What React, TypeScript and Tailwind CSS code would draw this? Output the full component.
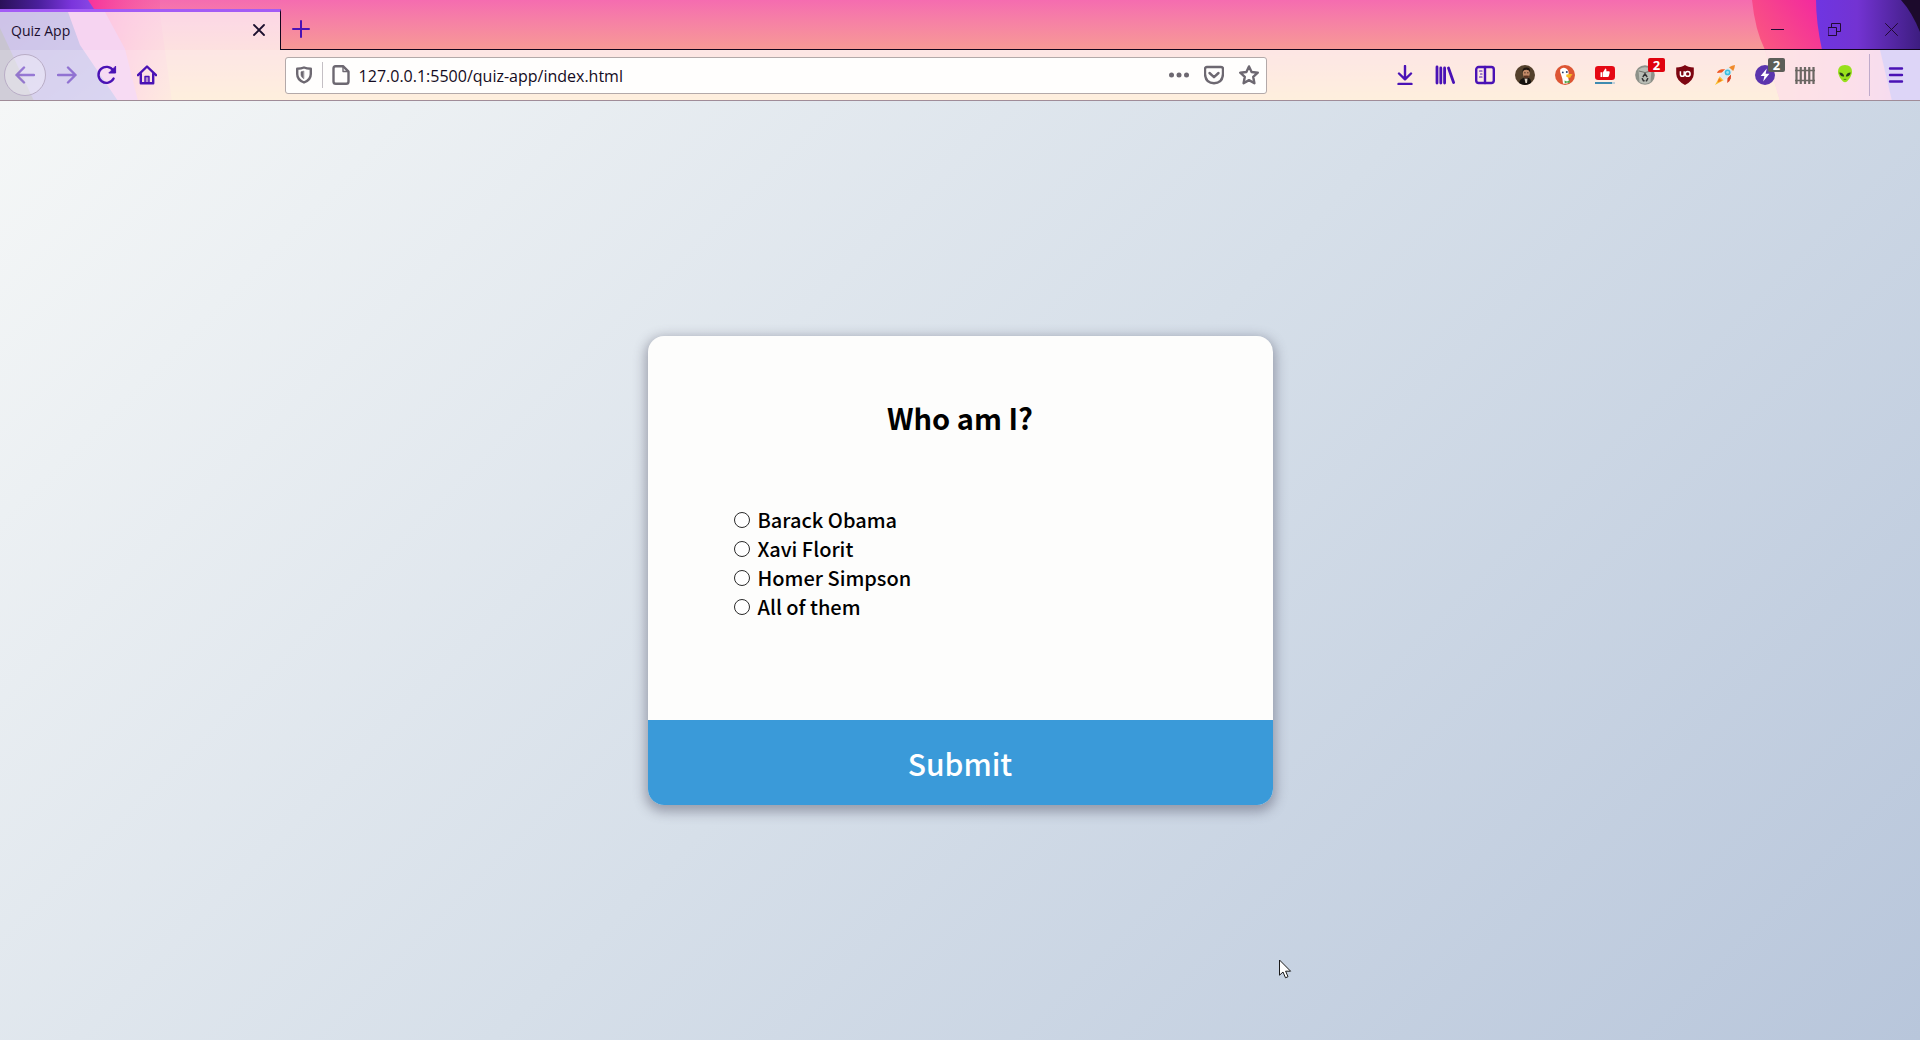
import type { ReactNode } from "react";

const ANSWERS = ["Barack Obama", "Xavi Florit", "Homer Simpson", "All of them"];

function ThemeLeft() {
  return (
    <svg className="absolute top-0 left-0 h-full w-[180px]" viewBox="0 0 180 101" preserveAspectRatio="none" aria-hidden="true">
      <defs>
        <linearGradient id="violetLeft" x1="0" x2="1" y1="0" y2="0">
          <stop offset="0" stopColor="#2a1158" />
          <stop offset="0.4" stopColor="#4a1f9c" />
          <stop offset="0.75" stopColor="#7b35dc" />
          <stop offset="1" stopColor="#8a4be6" />
        </linearGradient>
        <linearGradient id="magentaLeft" x1="0" x2="1" y1="0" y2="0">
          <stop offset="0.5" stopColor="#f72f9a" />
          <stop offset="1" stopColor="#f8629f" stopOpacity="0.2" />
        </linearGradient>
        <linearGradient id="lowLeft" x1="0" x2="1" y1="0" y2="1">
          <stop offset="0" stopColor="#5a35b0" />
          <stop offset="1" stopColor="#6a5ac8" />
        </linearGradient>
      </defs>
      <path d="M0 0H160V14L172 101H0Z" fill="url(#magentaLeft)" />
      <path d="M0 12H105L125 49L138 101H0Z" fill="#e070d0" />
      <path d="M0 0H88L96 12H0Z" fill="url(#violetLeft)" />
      <path d="M0 12H68L80 45L118 101H0Z" fill="url(#lowLeft)" />
      <path d="M0 28L34 101H0Z" fill="#463a66" />
    </svg>
  );
}

function ThemeRight() {
  return (
    <svg className="absolute top-0 right-0 h-full w-[190px]" viewBox="0 0 190 101" preserveAspectRatio="none" aria-hidden="true">
      <defs>
        <linearGradient id="redRight" x1="0" x2="1" y1="0.5" y2="0">
          <stop offset="0" stopColor="#fb5c7c" />
          <stop offset="0.5" stopColor="#f32a9e" />
          <stop offset="1" stopColor="#e874c0" />
        </linearGradient>
        <linearGradient id="violetRight" x1="0" x2="1" y1="0" y2="0">
          <stop offset="0" stopColor="#6f35e2" />
          <stop offset="0.4" stopColor="#7333d2" />
          <stop offset="1" stopColor="#3d1d80" />
        </linearGradient>
        <linearGradient id="lowRight" x1="0" x2="1" y1="0" y2="0">
          <stop offset="0" stopColor="#fa8f96" />
          <stop offset="0.6" stopColor="#f07fae" />
          <stop offset="1" stopColor="#c46ad0" />
        </linearGradient>
      </defs>
      <path d="M22 0Q25 30 35 50L50 101H190V0Z" fill="url(#redRight)" />
      <path d="M35 50L50 101H190V50Z" fill="url(#lowRight)" />
      <path d="M86 0Q86 22 92 50H190V0Z" fill="url(#violetRight)" />
      <path d="M150 50L162 101H190V50Z" fill="#7a5ae0" />
      <path d="M171 0Q182 12 190 32V0Z" fill="#1c0a2c" />
    </svg>
  );
}

function Glyph({ children, size = 20, box = 20 }: { children: ReactNode; size?: number; box?: number }) {
  return (
    <svg
      width={size}
      height={size}
      viewBox={`0 0 ${box} ${box}`}
      fill="none"
      stroke="currentColor"
      strokeWidth="2.4"
      strokeLinecap="round"
      strokeLinejoin="round"
      aria-hidden="true"
      className="shrink-0"
    >
      {children}
    </svg>
  );
}

function ToolButton({ label, children, disabled }: { label: string; children: ReactNode; disabled?: boolean }) {
  return (
    <button
      type="button"
      aria-label={label}
      disabled={disabled}
      className="relative flex h-10 w-10 shrink-0 items-center justify-center text-[#4a12b5] disabled:text-[#4a12b5]/50"
    >
      {children}
    </button>
  );
}

function Badge({ children, red }: { children: ReactNode; red?: boolean }) {
  return (
    <span
      className={`absolute top-[3px] right-0 flex h-[14px] w-[17px] items-center justify-center rounded-[2px] text-[13px] leading-none font-bold text-white ${
        red ? "bg-[#e0030f]" : "bg-[#5c5e58]"
      }`}
    >
      {children}
    </span>
  );
}

function TitleBar() {
  return (
    <div className="relative flex h-[50px] items-end">
      <div className="relative flex h-[41px] w-[281px] shrink-0 items-center border-t-[3px] border-r border-t-[#a35cf5] border-r-[#12061c] bg-white/70 pr-[9px] pb-[2px] pl-[11px]">
        <span className="flex-1 text-[14px] text-[#1c0f2e]">Quiz App</span>
        <button type="button" aria-label="Close tab" className="flex h-6 w-6 items-center justify-center text-[#1c0f2e]">
          <Glyph size={12} box={12}>
            <path d="M1 1L11 11M11 1L1 11" strokeWidth="1.8" />
          </Glyph>
        </button>
      </div>
      <div className="flex h-full flex-1 items-center justify-between border-b border-[#12061c] pt-[9px]">
        <button type="button" aria-label="New tab" className="flex h-10 w-10 items-center justify-center text-[#4a12b5]">
          <Glyph size={18} box={18}>
            <path d="M9 1V17M1 9H17" strokeWidth="2" />
          </Glyph>
        </button>
        <div className="flex text-[#210a33]">
          <button type="button" aria-label="Minimize" className="flex h-10 w-[57px] items-center justify-center">
            <Glyph size={13} box={13}>
              <path d="M0 6.5H13" strokeWidth="1" />
            </Glyph>
          </button>
          <button type="button" aria-label="Restore" className="flex h-10 w-[57px] items-center justify-center">
            <Glyph size={13} box={13}>
              <path d="M0.5 4.5H8.5V12.5H0.5ZM3.5 4.5V0.5H12.5V8.5H8.5" strokeWidth="1" />
            </Glyph>
          </button>
          <button type="button" aria-label="Close" className="flex h-10 w-[57px] items-center justify-center">
            <Glyph size={13} box={13}>
              <path d="M0.5 0.5L12.5 12.5M12.5 0.5L0.5 12.5" strokeWidth="1" />
            </Glyph>
          </button>
        </div>
      </div>
    </div>
  );
}

function AddressBar() {
  return (
    <div className="flex h-[37px] min-w-0 flex-[984] items-center rounded-[3px] border border-[#b3a9a9] bg-[#fffefd] text-[#6d6871]">
      <button type="button" aria-label="Tracking protection" className="flex h-full w-9 shrink-0 items-center justify-center">
        <Glyph size={18} box={18}>
          <path d="M9 1.5C7 2.4 4.5 2.7 2.2 2.7V8C2.2 12.5 5 15 9 16.5C13 15 15.8 12.5 15.8 8V2.7C13.5 2.7 11 2.4 9 1.5Z" />
          <path d="M8.5 5.2L6 5.8V8.5C6 10.3 7 11.6 8.5 12.5Z" fill="currentColor" strokeWidth="0.6" />
        </Glyph>
      </button>
      <span className="h-[26px] w-px shrink-0 bg-[#c4bfc4]" />
      <button type="button" aria-label="Site information" className="flex h-full w-9 shrink-0 items-center justify-center">
        <Glyph>
          <path d="M4.5 1.2H12L17.5 6.7V16.5Q17.5 18.8 15.2 18.8H4.8Q2.5 18.8 2.5 16.5V3.4Q2.5 1.2 4.5 1.2Z" />
          <path d="M12 1.5V6.5H17" strokeWidth="1.4" />
        </Glyph>
      </button>
      <input
        type="text"
        aria-label="Address"
        defaultValue="127.0.0.1:5500/quiz-app/index.html"
        className="min-w-0 flex-1 bg-transparent pt-[2px] text-[16px] text-[#140b22] outline-none"
      />
      <button type="button" aria-label="Page actions" className="flex h-full w-[35px] shrink-0 items-center justify-center">
        <Glyph>
          <g fill="currentColor" stroke="none">
            <circle cx="2.5" cy="10" r="2.5" />
            <circle cx="10" cy="10" r="2.5" />
            <circle cx="17.5" cy="10" r="2.5" />
          </g>
        </Glyph>
      </button>
      <button type="button" aria-label="Save to Pocket" className="flex h-full w-[35px] shrink-0 items-center justify-center">
        <Glyph>
          <path d="M3 2H17Q19 2 19 4V9Q18.5 18 10 18.2Q1.5 18 1 9V4Q1 2 3 2Z" />
          <path d="M5.5 8L10 12.2L14.5 8" />
        </Glyph>
      </button>
      <button type="button" aria-label="Bookmark" className="flex h-full w-[35px] shrink-0 items-center justify-center">
        <Glyph>
          <path d="M10 1.4L12.6 7L18.8 7.7L14.2 11.8L15.4 18.2L10 15.1L4.6 18.2L5.8 11.8L1.2 7.7L7.4 7Z" />
        </Glyph>
      </button>
    </div>
  );
}

function Extensions() {
  return (
    <div className="flex shrink-0 items-center">
      <ToolButton label="Downloads">
        <Glyph>
          <path d="M10 1V14M4 8.5L10 14.3L16 8.5" />
          <path d="M3.5 19H16.5" />
        </Glyph>
      </ToolButton>
      <ToolButton label="Library">
        <Glyph>
          <path d="M2 2V18M5.8 3V18M9.6 3V18M13.5 3L18.6 17.5" strokeWidth="2.8" />
        </Glyph>
      </ToolButton>
      <ToolButton label="Sidebars">
        <Glyph>
          <rect x="1.2" y="2" width="17.6" height="16" rx="2.5" />
          <path d="M10 2V18" />
          <path d="M4.5 6H7M5.5 9H7M4.5 12H7" strokeWidth="1.2" />
        </Glyph>
      </ToolButton>
      <ToolButton label="Profile">
        <svg width="20" height="20" viewBox="0 0 20 20" aria-hidden="true">
          <circle cx="10" cy="10" r="10" fill="#54412c" />
          <path d="M4 18Q5 13.5 9 13L14 13Q16.5 15 16 18Q10 21.8 4 18Z" fill="#17130f" />
          <path d="M9.5 13.5L12.5 13.5L12 18L10.5 18Z" fill="#d9cfc2" />
          <ellipse cx="11.3" cy="8.3" rx="3.4" ry="4.7" fill="#c48b68" />
          <path d="M7.6 7Q7.2 2.5 11.5 2.6Q15.5 2.6 15 7Q14 4.8 11.2 4.8Q8.5 4.8 7.6 7Z" fill="#1d140e" />
          <path d="M8.4 10.8Q11.3 10 14.2 10.8Q13.8 13.4 11.3 13.5Q8.8 13.4 8.4 10.8Z" fill="#5a3422" />
          <path d="M9.2 7.8H10.6M12.1 7.8H13.5" stroke="#3a2116" strokeWidth="0.9" />
        </svg>
      </ToolButton>
      <ToolButton label="DuckDuckGo">
        <svg width="20" height="20" viewBox="0 0 20 20" aria-hidden="true">
          <circle cx="10" cy="10" r="10" fill="#dd5634" />
          <path d="M5.2 4.5Q8 1.6 11.5 3.8Q14 5.5 13.6 9.5L13.3 13L14.3 17.5Q11.5 19.3 8 18.6Q7.5 13 6 9.5Q4.7 6.5 5.2 4.5Z" fill="#fff" />
          <path d="M11.4 9.6Q14.5 8.5 17.3 9.2Q17.8 10.4 14.8 11Q17 11.4 15.3 12.5Q12.5 13.3 11.2 11.6Z" fill="#f8bd24" />
          <circle cx="11.8" cy="7" r="1" fill="#22406f" />
          <circle cx="7.8" cy="7.4" r="0.9" fill="#22406f" />
          <path d="M9.5 15.5L12 16.5L15 15L14.6 18.2L12 17.6L9.8 18.6Z" fill="#54a94a" />
        </svg>
      </ToolButton>
      <ToolButton label="Video likes">
        <svg width="20" height="20" viewBox="0 0 20 20" aria-hidden="true">
          <rect x="0" y="1" width="20" height="14" rx="3.2" fill="#e50914" />
          <path d="M5.5 7.2H7.4V12H5.5ZM8 7.2L10.3 3.4Q11.8 3.4 11.3 6.2H14Q15 6.5 14.7 7.7L13.8 11.3Q13.5 12 12.7 12H8Z" fill="#fff" />
          <rect x="0" y="17" width="17" height="2" fill="#3f8bb0" />
          <rect x="17" y="17" width="3" height="2" fill="#c3cfd6" />
        </svg>
      </ToolButton>
      <ToolButton label="Cookie cleaner">
        <svg width="20" height="20" viewBox="0 0 20 20" aria-hidden="true">
          <circle cx="10" cy="10" r="9.8" fill="#8d9189" />
          <path d="M3.5 4.5Q10 0 16.5 4.5L15.5 17Q10 20.5 4.5 17Z" fill="#b9bdb5" />
          <path d="M4 6Q10 9 16 6" stroke="#6f736c" strokeWidth="1" fill="none" />
          <path d="M7.8 12L10 8.8L12.2 12M13 13.2L11.6 15.7H10.7M7 13.2L8.4 15.7H9.6" stroke="#333" strokeWidth="1.4" fill="none" />
        </svg>
        <Badge red>2</Badge>
      </ToolButton>
      <ToolButton label="uBlock Origin">
        <svg width="20" height="20" viewBox="0 0 20 20" aria-hidden="true">
          <path d="M10 0Q13 2.4 18.8 2.5V9Q18.5 15.6 10 20Q1.5 15.6 1.2 9V2.5Q7 2.4 10 0Z" fill="#7d0611" />
          <path d="M5.4 6.3V9.5Q5.4 11.3 7.3 11.3Q9.2 11.3 9.2 9.5V6.3M9.2 8.9V11.3" stroke="#fff" strokeWidth="1.5" fill="none" />
          <circle cx="12.7" cy="8.9" r="2.4" stroke="#fff" strokeWidth="1.5" fill="none" />
        </svg>
      </ToolButton>
      <ToolButton label="Rocket">
        <svg width="22" height="22" viewBox="0 0 22 22" aria-hidden="true">
          <path d="M6 12L1 21L10 16Z" fill="#f9c22c" />
          <path d="M5 14L3.5 18.5L8 16.8Z" fill="#f47b20" />
          <path d="M8 8.5L3 9Q4 6 7.8 5.3L11.5 5.2Z" fill="#ef5a24" />
          <path d="M13.5 14L13.2 19Q16 17.5 16.8 14.2L17 10.6Z" fill="#d8401f" />
          <path d="M5.8 12.6Q9.5 4 20 1.5Q18.5 12 9.4 16.3Z" fill="#e3e8ea" />
          <path d="M15 3.2Q18 1.5 21 1Q20.8 4 19.2 7Z" fill="#f08a2b" />
          <circle cx="13.6" cy="8.4" r="2.9" fill="#38bfe0" />
          <circle cx="13.6" cy="8.4" r="1.4" fill="#9be6f3" />
        </svg>
      </ToolButton>
      <ToolButton label="Page speed">
        <svg width="20" height="20" viewBox="0 0 20 20" aria-hidden="true">
          <circle cx="10" cy="10" r="10" fill="#5b35ad" />
          <path d="M11.8 3.5L5.6 11H9.4L8.2 16.5L14.4 8.8H10.6Z" fill="#fff" />
        </svg>
        <Badge>2</Badge>
      </ToolButton>
      <ToolButton label="Grid fence">
        <svg width="20" height="20" viewBox="0 0 20 20" stroke="#6b6763" strokeWidth="2.2" aria-hidden="true">
          <path d="M1.5 2V19M5.75 2V19M10 2V19M14.25 2V19M18.5 2V19" />
          <path d="M0 5.5H20M0 15.5H20" strokeWidth="1.6" />
        </svg>
      </ToolButton>
      <ToolButton label="Alien">
        <svg width="20" height="20" viewBox="0 0 20 20" aria-hidden="true">
          <path d="M10 0Q17 0 17 7Q16.5 12 12 16.5Q10 18 8 16.5Q3.5 12 3 7Q3 0 10 0Z" fill="#98e01c" />
          <path d="M4.3 7.6Q8.6 7.6 9.2 11.4Q5.2 12 4.3 7.6ZM15.7 7.6Q11.4 7.6 10.8 11.4Q14.8 12 15.7 7.6Z" fill="#26391b" />
          <path d="M8.7 14.4H11.3" stroke="#4f8410" strokeWidth="1" />
        </svg>
      </ToolButton>
      <span className="ml-[4px] h-[42px] w-px bg-[#bfaacb]" />
      <button type="button" aria-label="Open menu" className="flex h-10 w-[50px] items-center justify-center pl-[2px] text-[#4a12b5]">
        <Glyph size={16} box={16}>
          <path d="M2 1.5H14M2 8H14M2 14.5H14" />
        </Glyph>
      </button>
    </div>
  );
}

function Toolbar() {
  return (
    <div className="relative flex h-[51px] items-center border-b border-[#a08c98] bg-white/75">
      <div className="flex shrink-0 items-center pl-[4px]">
        <div className="mr-px flex h-[42px] w-[42px] items-center justify-center rounded-full border border-[#b9adc6] bg-white/30">
          <ToolButton label="Back" disabled>
            <Glyph>
              <path d="M19 10H1.5M9 2.5L1.5 10L9 17.5" />
            </Glyph>
          </ToolButton>
        </div>
        <ToolButton label="Forward" disabled>
          <Glyph>
            <path d="M1 10H18.5M11 2.5L18.5 10L11 17.5" />
          </Glyph>
        </ToolButton>
        <ToolButton label="Reload">
          <Glyph>
            <path d="M16.6 13.5A8 8 0 1 1 16.2 5.5" />
            <path d="M18.6 1.5V8H12.2Z" fill="currentColor" strokeWidth="1" />
          </Glyph>
        </ToolButton>
        <ToolButton label="Home">
          <Glyph>
            <path d="M1 10.2L10 1.5L19 10.2" />
            <path d="M3.8 9V18.3H16.2V9" />
            <path d="M8 18V11.5H12V18" fill="currentColor" fillOpacity="0.4" strokeWidth="1.4" />
          </Glyph>
        </ToolButton>
      </div>
      <span className="flex-[118]" />
      <AddressBar />
      <span className="flex-[118]" />
      <Extensions />
    </div>
  );
}

function QuizCard() {
  return (
    <form
      onSubmit={(e) => e.preventDefault()}
      className="w-[625px] max-w-full overflow-hidden rounded-2xl bg-[#fdfdfc] font-['Noto_Sans_CJK_SC','Noto_Sans',sans-serif] text-black shadow-[0_4px_12px_3px_rgba(70,70,90,0.42)]"
    >
      <fieldset className="px-[86px] pt-[61px] pb-[99px]">
        <legend className="float-left w-full text-center text-[29px] leading-10 font-bold">Who am I?</legend>
        <ul className="clear-both pt-[68px]">
          {ANSWERS.map((answer, i) => (
            <li key={answer} className="h-[29px]">
              <label className="inline-flex h-full items-center gap-2 text-[20px] leading-none font-medium">
                <input
                  type="radio"
                  name="answer"
                  value={i}
                  className="h-4 w-4 appearance-none rounded-full border border-[#2a2a2a] bg-white checked:border-4"
                />
                {answer}
              </label>
            </li>
          ))}
        </ul>
      </fieldset>
      <button type="submit" className="block w-full bg-[#3a9ad9] pt-[21px] pb-[19px] text-[30px] leading-[45px] font-medium text-white">
        Submit
      </button>
    </form>
  );
}

export default function App() {
  return (
    <div className="flex min-h-screen flex-col font-['Open_Sans','Noto_Sans',sans-serif]">
      <header className="relative bg-linear-to-b from-[#f56cb0] via-[#f79a94] to-[#fac078]">
        <ThemeLeft />
        <ThemeRight />
        <TitleBar />
        <Toolbar />
      </header>
      <main className="relative flex flex-1 items-center justify-center bg-linear-[135deg,#f5f7f7_0%,#d6dfe9_50%,#b8c6db_100%]">
        <QuizCard />
        <svg className="absolute top-[91.4%] left-[66.6%]" width="13" height="20" viewBox="0 0 13 20" aria-hidden="true">
          <path d="M0.5 1V16.2L4 13L6.5 18.8L9 17.7L6.6 12.2H11.6Z" fill="#fff" stroke="#1a1a1a" />
        </svg>
      </main>
    </div>
  );
}
